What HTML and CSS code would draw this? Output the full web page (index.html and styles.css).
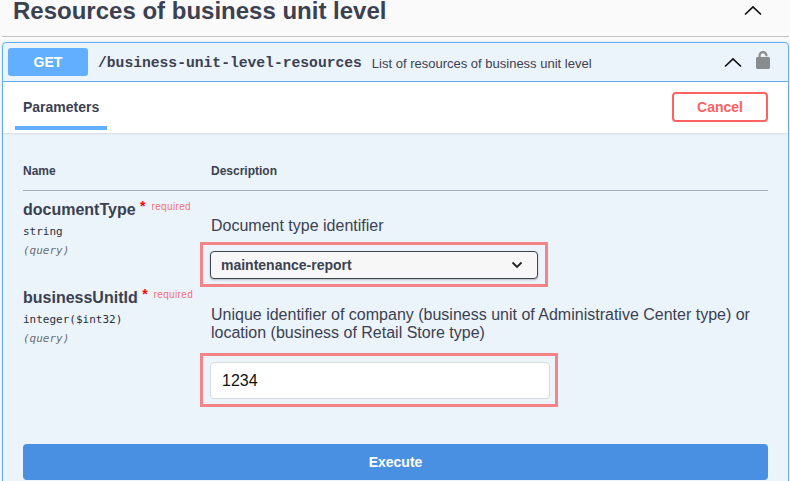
FILE: index.html
```html
<!DOCTYPE html>
<html lang="en">
<head>
<meta charset="utf-8">
<title>Resources of business unit level</title>
<link rel="stylesheet" href="styles.css">
</head>
<body>
<div class="page">
  <header class="tag">
    <h3 class="tag-title">Resources of business unit level</h3>
    <svg class="chev" width="20" height="20" viewBox="0 0 20 20"><path d="M2 14.500 10 7l8 7.500" fill="none" stroke="#111" stroke-width="1.700"/></svg>
  </header>
  <section class="opblock">
    <div class="summary">
      <span class="method">GET</span>
      <span class="path">/business-unit-level-resources</span>
      <span class="summary-desc">List of resources of business unit level</span>
      <svg class="chev-small" width="20" height="20" viewBox="0 0 20 20"><path d="M2 14.500 10 7l8 7.500" fill="none" stroke="#111" stroke-width="1.700"/></svg>
      <svg class="lock" width="16" height="20" viewBox="0 0 16 20"><path fill="#8a8d90" d="M1 8.500C1 7.700 1.600 7 2.400 7h1.100V5.600C3.500 3 5.400 1 8 1s4.500 2 4.500 4.500v.8h-2.200v-.8C10.300 4.200 9.300 3.200 8 3.200S5.700 4.200 5.700 5.600V7h7.900c.8 0 1.400.7 1.400 1.500v9.100c0 .8-.6 1.400-1.400 1.400H2.400c-.8 0-1.400-.6-1.400-1.400z"/></svg>
    </div>
    <div class="tabs">
      <span class="tab">Parameters</span>
      <button class="cancel" type="button">Cancel</button>
    </div>
    <div class="params">
      <div class="param-head">
        <span>Name</span>
        <span>Description</span>
      </div>
      <div class="param-row first">
        <div class="param-name">
          <div class="name">documentType <span class="star">*</span><span class="req">required</span></div>
          <div class="type">string</div>
          <div class="in">(query)</div>
        </div>
        <div class="param-desc">
          <p class="desc-text">Document type identifier</p>
          <div class="mark mark-select">
            <div class="select"><span>maintenance-report</span>
              <svg width="12" height="8" viewBox="0 0 12 8"><path d="M1.500 1.500 6 6l4.500-4.500" fill="none" stroke="#222" stroke-width="1.800"/></svg>
            </div>
          </div>
        </div>
      </div>
      <div class="param-row second">
        <div class="param-name">
          <div class="name">businessUnitId <span class="star">*</span><span class="req">required</span></div>
          <div class="type">integer($int32)</div>
          <div class="in">(query)</div>
        </div>
        <div class="param-desc">
          <p class="desc-text">Unique identifier of company (business unit of Administrative Center type) or location (business of Retail Store type)</p>
          <div class="mark mark-input">
            <div class="input">1234</div>
          </div>
        </div>
      </div>
      <button class="execute" type="button">Execute</button>
    </div>
  </section>
</div>
</body>
</html>
```
FILE: styles.css
```css
* { box-sizing: border-box; }
html, body { margin: 0; height: 481px; overflow: hidden; background: #fafafa; }
body { font-family: "Liberation Sans", Arial, sans-serif; color: #3b4151; }
.page { width: 790px; padding: 0 1px 0 2px; }

.tag { display: flex; justify-content: space-between; align-items: flex-start; height: 37px; border-bottom: 1px solid #c4c4c4; padding: 0 26px 0 11px; }
.tag-title { margin: 0; font-size: 24px; line-height: 22px; font-weight: 700; color: #3b4151; }

.opblock { margin-top: 5px; border: 1px solid #61affe; border-radius: 4px; background: #ebf3fb; height: 460px; box-shadow: 0 0 3px rgba(0,0,0,.12); }
.summary { display: flex; align-items: center; height: 39px; border-bottom: 1px solid #61affe; padding: 0 4px 0 5px; }
.method { width: 80px; height: 28px; border-radius: 3px; background: #61affe; color: #fff; font-size: 14px; font-weight: 700; line-height: 28px; text-align: center; }
.path { margin: 2px 0 0 10px; font-family: "Liberation Mono", monospace; font-weight: 700; font-size: 14.67px; color: #3b4151; }
.summary-desc { margin: 2px 0 0 10px; font-size: 13px; color: #3b4151; flex: 1; }
.chev-small { margin-right: 12px; }
.lock { margin-right: 13px; margin-top: -4px; }

.tabs { display: flex; justify-content: space-between; align-items: flex-start; height: 51px; background: #fff; padding: 10px 20px 0 12px; box-shadow: 0 1px 2px rgba(0,0,0,.1); position: relative; }
.tab { width: 92px; height: 38px; padding: 7px 0 0 8px; font-size: 14px; font-weight: 700; line-height: 16px; color: #3b4151; border-bottom: 4px solid #61affe; }
.cancel { width: 96px; height: 30px; background: #fff; border: 2px solid #ff6060; border-radius: 4px; color: #ff6060; font: 700 14px "Liberation Sans", Arial, sans-serif; padding: 0; }

.params { padding: 0 20px; }
.param-head { display: grid; grid-template-columns: 188px 1fr; height: 58px; padding-top: 31px; border-bottom: 1px solid #a7aebb; font-size: 12px; font-weight: 700; line-height: 14px; }
.param-row { display: grid; grid-template-columns: 188px 1fr; }
.first { height: 98px; padding-top: 10px; }
.second { height: 155px; }
.name { font-size: 16px; font-weight: 700; line-height: 18px; white-space: nowrap; }
.star { color: #f00; font-size: 14px; position: relative; top: -4px; }
.req { color: rgba(255,0,0,.6); font-size: 10px; font-weight: 400; letter-spacing: .35px; position: relative; top: -5px; margin-left: 6px; }
.type { margin-top: 3px; font-family: "DejaVu Sans Mono", monospace; font-size: 11px; line-height: 16px; color: #2b2f3a; }
.in { margin-top: 3px; font-family: "DejaVu Sans Mono", monospace; font-size: 11px; line-height: 16px; font-style: italic; color: #6b6e75; }
.desc-text { margin: 0; font-size: 16px; line-height: 18px; color: #3b4151; }
.first .desc-text { padding-top: 16px; }
.second .desc-text { padding-top: 17px; }
.mark { border: 3px solid #f48488; }
.mark-select { width: 348px; height: 45px; margin: 7px 0 0 -11px; padding: 6px 7px; }
.select { display: flex; align-items: center; justify-content: space-between; height: 28px; padding: 0 14px 0 10px; border: 1px solid #41444e; border-radius: 4px; background: #f7f7f7; box-shadow: 0 1px 2px rgba(0,0,0,.25); font-size: 14px; font-weight: 700; color: #3b4151; }
.mark-input { width: 358px; height: 54px; margin: 11px 0 0 -11px; padding: 6px 5px 5px 7px; }
.input { height: 37px; padding: 0 11px; border: 1px solid #d9d9d9; border-radius: 4px; background: #fff; font-size: 16px; line-height: 35px; color: #111; }
.execute { display: block; width: 745px; height: 36px; background: #4990e2; border: 0; border-radius: 4px; color: #fff; font: 700 14px "Liberation Sans", Arial, sans-serif; }
```
